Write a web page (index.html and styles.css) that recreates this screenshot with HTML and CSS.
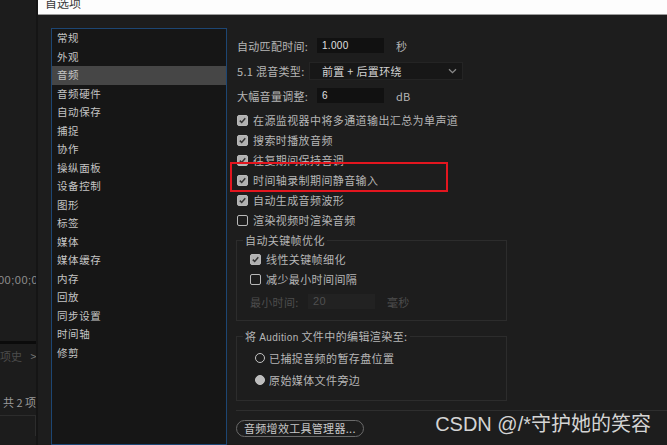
FILE: index.html
```html
<!DOCTYPE html>
<html lang="zh-CN">
<head>
    <meta charset="UTF-8">
    <title>首选项 - 音频</title>
    <link rel="stylesheet" href="styles.css">
</head>
<body>

    <div class="backdrop">
        <div class="bg-timecode">00;00;0</div>
        <div class="bg-rule"></div>
        <div class="bg-tab">项史 <span>&gt;</span></div>
        <div class="bg-count">共 2 项</div>
        <div class="bg-box"></div>
    </div>

    <div class="dialog">
        <div class="title-bar">首选项</div>

        <div class="dialog-body">
            <ul class="nav">
                <li>常规</li>
                <li>外观</li>
                <li class="active">音频</li>
                <li>音频硬件</li>
                <li>自动保存</li>
                <li>捕捉</li>
                <li>协作</li>
                <li>操纵面板</li>
                <li>设备控制</li>
                <li>图形</li>
                <li>标签</li>
                <li>媒体</li>
                <li>媒体缓存</li>
                <li>内存</li>
                <li>回放</li>
                <li>同步设置</li>
                <li>时间轴</li>
                <li>修剪</li>
            </ul>

            <div class="panel">
                <div class="field">
                    <span class="label">自动匹配时间:</span>
                    <span class="input">1.000</span>
                    <span class="unit">秒</span>
                </div>
                <div class="field field-select">
                    <span class="label">5.1 混音类型:</span>
                    <span class="select">前置 + 后置环绕
                        <svg class="chevron" width="9" height="6" viewBox="0 0 9 6"><path d="M1 1.2 L4.5 4.6 L8 1.2" fill="none" stroke="#8a8a8a" stroke-width="1.3"/></svg>
                    </span>
                </div>
                <div class="field field-gain">
                    <span class="label">大幅音量调整:</span>
                    <span class="input">6</span>
                    <span class="unit">dB</span>
                </div>

                <div class="checks">
                    <div class="check on"><span class="box"></span>在源监视器中将多通道输出汇总为单声道</div>
                    <div class="check on"><span class="box"></span>搜索时播放音频</div>
                    <div class="check on"><span class="box"></span>往复期间保持音调</div>
                    <div class="check on marked"><span class="box"></span>时间轴录制期间静音输入</div>
                    <div class="check on"><span class="box"></span>自动生成音频波形</div>
                    <div class="check"><span class="box"></span>渲染视频时渲染音频</div>
                </div>

                <fieldset class="group group-keys">
                    <legend>自动关键帧优化</legend>
                    <div class="check on"><span class="box"></span>线性关键帧细化</div>
                    <div class="check"><span class="box"></span>减少最小时间间隔</div>
                    <div class="field disabled">
                        <span class="label">最小时间:</span>
                        <span class="input">20</span>
                        <span class="unit">毫秒</span>
                    </div>
                </fieldset>

                <fieldset class="group group-render">
                    <legend>将 <span class="latin">Audition</span> 文件中的编辑渲染至:</legend>
                    <div class="radio"><span class="dot"></span>已捕捉音频的暂存盘位置</div>
                    <div class="radio on"><span class="dot"></span>原始媒体文件旁边</div>
                </fieldset>

                <div class="divider"></div>

                <button class="plugin-button">音频增效工具管理器...</button>
            </div>
        </div>
    </div>

    <div class="watermark">CSDN @/*守护她的笑容</div>

</body>
</html>
```

FILE: styles.css
```css
html, body {
    margin: 0;
    height: 100%;
    overflow: hidden;
}

body {
    display: flex;
    background-color: #1c1c1c;
    font-family: "Noto Sans CJK SC", "Liberation Sans", sans-serif;
    color: #b6b6b6;
}

/* app behind the dialog */
.backdrop {
    width: 36px;
    flex-shrink: 0;
    border-right: 2px solid #151515;
    overflow: hidden;
    font-size: 11px;
    color: #8e8e8e;
}

.bg-timecode {
    margin-top: 274px;
    margin-left: -2px;
    font-family: "Liberation Sans", sans-serif;
    letter-spacing: 0.5px;
    white-space: nowrap;
}

.bg-rule {
    margin-top: 55px;
    height: 3px;
    background-color: #0b0b0b;
}

.bg-tab {
    margin-top: 4px;
    color: #4c4c4c;
    white-space: nowrap;
}

.bg-tab span {
    margin-left: 6px;
    color: #777;
}

.bg-count {
    margin-top: 30px;
    margin-left: 3px;
    color: #9a9a9a;
    white-space: nowrap;
}

.bg-box {
    margin-top: 5px;
    height: 20px;
    border-top: 1px solid #2c2c2c;
    border-right: 1px solid #2c2c2c;
}

/* dialog */
.dialog {
    flex: 1;
    display: flex;
    flex-direction: column;
}

.title-bar {
    height: 14px;
    background-color: #fdfdfd;
    border-bottom: 1px solid #9c9c9c;
    padding-left: 7px;
    font-size: 12px;
    line-height: 6px;
    color: #3a3a3a;
    overflow: hidden;
}

.dialog-body {
    flex: 1;
    display: flex;
    background-color: #1d1d1d;
}

.nav {
    list-style: none;
    margin: 13px 0 0 13px;
    padding: 0;
    width: 174px;
    border: 1px solid #1d4673;
    background-color: #161616;
}

.nav li {
    height: 18.5px;
    line-height: 18.5px;
    padding-left: 5px;
    font-size: 10.5px;
    letter-spacing: 0.6px;
    color: #c4c4c4;
}

.nav li.active {
    background-color: #464646;
}

.panel {
    flex: 1;
    margin-left: 10px;
    padding-top: 23px;
    display: flex;
    flex-direction: column;
    align-items: flex-start;
}

.field {
    display: flex;
    align-items: center;
    height: 15px;
    font-size: 11px;
    letter-spacing: 0.3px;
}

.field .label {
    width: 80px;
}

.input {
    width: 62px;
    height: 15px;
    line-height: 15px;
    padding-left: 5px;
    background-color: #111;
    color: #e0e0e0;
    font-family: "Liberation Sans", sans-serif;
    font-size: 10px;
}

.unit {
    margin-left: 12px;
}

.field-select {
    margin-top: 10px;
    height: 16px;
}

.field-select .label {
    width: 72px;
}

.select {
    position: relative;
    width: 140px;
    height: 16px;
    line-height: 16px;
    padding-left: 12px;
    background-color: #171717;
    border: 1px solid #242424;
    color: #d2d2d2;
    font-size: 11px;
}

.chevron {
    position: absolute;
    right: 5px;
    top: 5px;
}

.field-gain {
    margin-top: 9px;
}

.checks {
    margin-top: 7px;
}

.check, .radio {
    display: flex;
    align-items: center;
    height: 20px;
    font-size: 11px;
    letter-spacing: 0.4px;
    white-space: nowrap;
}

.box {
    width: 9px;
    height: 9px;
    margin-right: 5px;
    border: 1px solid #b8b8b8;
    border-radius: 2px;
    flex-shrink: 0;
}

.check.on .box {
    background-color: #b0b0b0;
    background-image: url("data:image/svg+xml,%3Csvg xmlns='http://www.w3.org/2000/svg' viewBox='0 0 9 9'%3E%3Cpath d='M1.8 4.6 L3.7 6.5 L7.3 2.3' fill='none' stroke='%23333' stroke-width='1.5'/%3E%3C/svg%3E");
}

/* red annotation frame */
.marked {
    position: relative;
}

.marked::after {
    content: "";
    position: absolute;
    left: -7px;
    top: -8px;
    width: 214px;
    height: 26px;
    border: 2px solid #e3161f;
}

.group {
    margin: 3px 0 0 -1px;
    width: 244px;
    padding: 2px 12px 11px 13px;
    border: 1px solid #2c2c2c;
}

.group legend {
    margin-left: -7px;
    padding: 0 2px;
    height: 14px;
    line-height: 14px;
    font-size: 11px;
    letter-spacing: 0.4px;
}

.latin {
    font-family: "Liberation Sans", sans-serif;
    font-size: 10px;
}

.disabled {
    margin-top: 5px;
    color: #4d4d4d;
}

.disabled .label {
    width: 58px;
}

.disabled .input {
    background-color: #222;
    color: #505050;
    font-size: 11px;
}

.group-render {
    margin-top: 8px;
    padding-top: 4px;
    padding-bottom: 9px;
}

.radio {
    height: 22px;
    padding-left: 5px;
}

.dot {
    width: 8px;
    height: 8px;
    margin-right: 4px;
    border: 1.5px solid #c4c4c4;
    border-radius: 50%;
    flex-shrink: 0;
}

.radio.on .dot {
    background-color: #bdbdbd;
}

.divider {
    align-self: stretch;
    margin: 9px 0 0 -1px;
    height: 1px;
    background-color: #2e2e2e;
}

.plugin-button {
    margin: 9px 0 0 -1px;
    height: 17px;
    padding: 0 7px;
    border: 1px solid #6a6a6a;
    border-radius: 9px;
    background-color: #1d1d1d;
    color: #c8c8c8;
    font-family: "Noto Sans CJK SC", sans-serif;
    font-size: 11px;
    letter-spacing: 0.3px;
    line-height: 15px;
}

.watermark {
    position: absolute;
    right: 16px;
    bottom: 8px;
    font-family: "Liberation Sans", "Noto Sans CJK SC", sans-serif;
    font-size: 20px;
    color: #d4d4d4;
}
```
